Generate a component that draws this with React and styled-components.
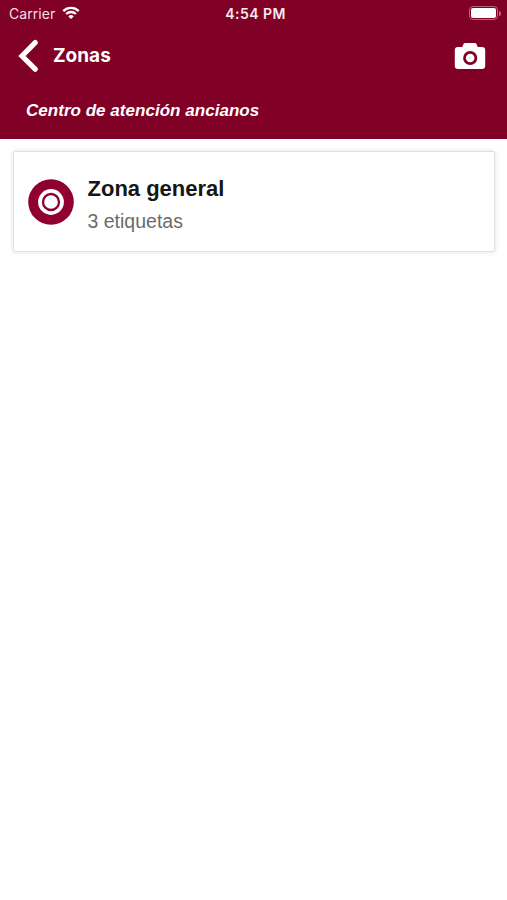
import React from "react"
import styled, { createGlobalStyle } from "styled-components"

const zones = [
    { id: 1, name: "Zona general", tags: 3 }
]

function WifiIcon() {
    return (
        <svg width="18" height="14" viewBox="0 0 18 14" fill="none" stroke="#fff" strokeWidth="2.3">
            <path d="M1.3 5.1a11 11 0 0 1 15.4 0" />
            <path d="M4.1 8a7 7 0 0 1 9.8 0" />
            <path d="M9 13.1 6.3 10.4a3.8 3.8 0 0 1 5.4 0z" fill="#fff" stroke="none" />
        </svg>
    )
}

function BackIcon() {
    return (
        <svg width="20" height="34" viewBox="0 0 20 34" fill="none">
            <path d="M17.2 3.6 4 17l13.2 13.2" stroke="#fff" strokeWidth="5.2" strokeLinecap="round" />
        </svg>
    )
}

function CameraIcon() {
    return (
        <svg width="32" height="28" viewBox="0 0 32 28">
            <path
                fill="#fff"
                d="M11.2 1h9.6c.8 0 1.4.4 1.7 1.1L23.7 5H28a3.2 3.2 0 0 1 3.2 3.2v15.6A3.2 3.2 0 0 1 28 27H4a3.2 3.2 0 0 1-3.2-3.2V8.2A3.2 3.2 0 0 1 4 5h4.3l1.2-2.9C9.8 1.4 10.4 1 11.2 1z"
            />
            <circle cx="16.2" cy="16" r="5.7" fill="none" stroke="#800026" strokeWidth="2.8" />
        </svg>
    )
}

function ZoneIcon() {
    return (
        <svg width="46" height="46" viewBox="0 0 46 46">
            <circle cx="23" cy="23" r="22.8" fill="#8f0031" />
            <circle cx="23" cy="23" r="12.9" fill="#fff" />
            <circle cx="23" cy="23" r="8" fill="none" stroke="#8f0031" strokeWidth="2.3" />
        </svg>
    )
}

function App() {
    const displayZones = zones.map((zone) => (
        <ZoneCard key={zone.id}>
            <ZoneIcon />
            <ZoneText>
                <ZoneName>{zone.name}</ZoneName>
                <ZoneTags>{zone.tags} etiquetas</ZoneTags>
            </ZoneText>
        </ZoneCard>
    ))

    return (
        <Page>
            <GlobalStyle />
            <Header>
                <StatusBar>
                    <Carrier>
                        <span>Carrier</span>
                        <WifiIcon />
                    </Carrier>
                    <Time>4:54 PM</Time>
                    <BatteryWrapper>
                        <Battery />
                        <BatteryTip />
                    </BatteryWrapper>
                </StatusBar>
                <Toolbar>
                    <IconButton aria-label="Volver">
                        <BackIcon />
                    </IconButton>
                    <Title>Zonas</Title>
                    <IconButton aria-label="Cámara">
                        <CameraIcon />
                    </IconButton>
                </Toolbar>
                <Subtitle>Centro de atención ancianos</Subtitle>
            </Header>
            <ZoneList>
                {displayZones}
            </ZoneList>
        </Page>
    )
}

const GlobalStyle = createGlobalStyle`
    * {
        box-sizing: border-box;
    }

    body {
        margin: 0;
        background: #fff;
    }

    svg {
        display: block;
        flex-shrink: 0;
    }
`

const Page = styled.div`
    min-height: 100vh;
    background: #fff;
    font-family: "Liberation Sans", Arial, sans-serif;
`

const Header = styled.header`
    height: 139px;
    background: #800026;
    color: #fff;
`

const StatusBar = styled.div`
    display: grid;
    grid-template-columns: 1fr auto 1fr;
    align-items: center;
    height: 28px;
    padding: 0 6px 2px 9px;
    font-family: Inter, sans-serif;
    font-size: 14px;
`

const Carrier = styled.div`
    display: flex;
    align-items: center;
    gap: 7px;
    color: #f3dfe4;
    letter-spacing: 0.05px;
`

const Time = styled.span`
    padding-left: 1px;
    color: #f8e9ed;
    font-weight: 600;
    letter-spacing: 0.45px;
`

const BatteryWrapper = styled.div`
    display: flex;
    align-items: center;
    justify-content: flex-end;
    gap: 1px;
`

const Battery = styled.div`
    width: 29px;
    height: 14px;
    border: 1px solid #b3667d;
    border-radius: 4px;
    background: #fff content-box;
    padding: 1px;
`

const BatteryTip = styled.div`
    width: 2px;
    height: 5px;
    border-radius: 0 2px 2px 0;
    background: #b3667d;
`

const Toolbar = styled.div`
    display: flex;
    align-items: center;
    height: 56px;
    padding: 0 21px 0 18px;
`

const IconButton = styled.button`
    padding: 0;
    border: none;
    background: none;
`

const Title = styled.h1`
    flex: 1;
    margin: 0 0 0 15px;
    font-family: Inter, sans-serif;
    font-size: 19px;
    font-weight: 700;
    line-height: 24px;
`

const Subtitle = styled.p`
    margin: 17px 0 0 26px;
    font-size: 17px;
    font-style: italic;
    font-weight: bold;
    letter-spacing: 0.03px;
    line-height: 20px;
`

const ZoneList = styled.main`
    padding: 12px 12px 0 13px;
`

const ZoneCard = styled.section`
    display: flex;
    align-items: center;
    gap: 13.5px;
    height: 101px;
    padding: 0 14px;
    border: 1px solid #dfe1e1;
    border-radius: 2px;
    box-shadow: 0 0 5px rgba(0, 0, 0, 0.12);
`

const ZoneText = styled.div`
    padding-top: 7px;
`

const ZoneName = styled.h2`
    margin: 0;
    color: #161616;
    font-size: 22px;
    line-height: 30px;
`

const ZoneTags = styled.p`
    margin: 2px 0 0;
    color: #6b6b6b;
    font-size: 19.5px;
    line-height: 30px;
`

export default App;
